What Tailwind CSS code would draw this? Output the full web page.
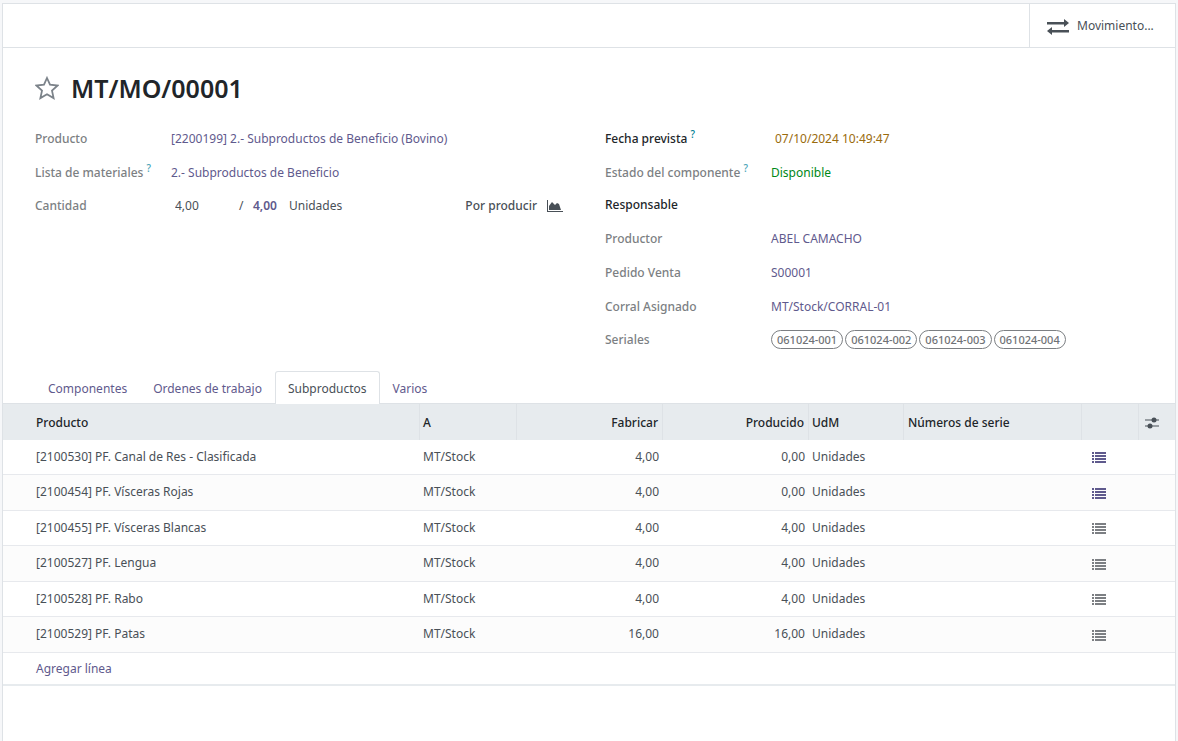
<!DOCTYPE html>
<html lang="es">
<head>
  <meta charset="UTF-8" />
  <meta name="viewport" content="width=device-width, initial-scale=1" />
  <title>MT/MO/00001 - Orden de fabricación</title>
  <script src="https://cdn.jsdelivr.net/npm/@tailwindcss/browser@4"></script>
</head>
<body class="min-h-screen flex flex-col bg-[#f6f7f9] px-[2px] pt-[3px] font-['Segoe_UI','Noto_Sans',sans-serif] text-[12px] leading-5 text-[#495057]">

  <svg class="hidden">
    <symbol id="icon-list" viewBox="0 0 14 11">
      <path d="M0 0h2v2H0zM3 0h11v2H3zM0 3h2v2H0zM3 3h11v2H3zM0 6h2v2H0zM3 6h11v2H3zM0 9h2v2H0zM3 9h11v2H3z" />
    </symbol>
  </svg>

  <main class="grow flex flex-col bg-white border border-b-0 border-[#dee2e6]">

    <!-- Stat buttons -->
    <div class="h-11 flex justify-end border-b border-[#dee2e6]">
      <button type="button" class="w-[146px] flex items-center gap-[7px] pl-4 border-l border-[#dee2e6]">
        <svg class="w-6 h-4 mt-[2px] fill-[#495057]" viewBox="0 0 24 16">
          <path d="M1 3h17V0l5 4-5 4V5.500H1zM23 13.500H6V16l-5-4 5-4v3h17z" />
        </svg>
        <span>Movimiento...</span>
      </button>
    </div>

    <!-- Title -->
    <div class="flex items-center gap-3 px-8 pt-6">
      <button type="button" aria-label="Favorito">
        <svg class="w-6 h-6 fill-none stroke-[#7c838a]" viewBox="0 0 24 24" stroke-width="1.8">
          <path d="M12 2l3 6.700 7.700.8-5.700 5.100 1.600 7.500L12 18.300l-6.600 3.800L7 14.600 1.300 9.500 9 8.700z" />
        </svg>
      </button>
      <h1 class="text-[25px] leading-8 font-semibold text-[#212529]">MT/MO/00001</h1>
    </div>

    <!-- Fields -->
    <div class="grid grid-cols-2 gap-8 px-8 pt-[18px]">
      <div>
        <div class="h-[34px] flex items-center">
          <span class="w-[136px] font-medium text-[#7c7f83]">Producto</span>
          <a href="#" class="text-[#5f5a8d]">[2200199] 2.- Subproductos de Beneficio (Bovino)</a>
        </div>
        <div class="h-[33px] flex items-center">
          <span class="w-[136px] font-medium text-[#7c7f83]">Lista de materiales <sup class="text-[10px] text-[#4aa5b8]">?</sup></span>
          <a href="#" class="text-[#5f5a8d]">2.- Subproductos de Beneficio</a>
        </div>
        <div class="h-[33px] flex items-center">
          <label for="qty" class="w-[136px] font-medium text-[#7c7f83]">Cantidad</label>
          <input id="qty" type="text" value="4,00" class="w-16 px-1 bg-transparent" />
          <span class="w-[18px] pl-1">/</span>
          <a href="#" class="font-semibold text-[#5f5a8d]">4,00</a>
          <span class="pl-3">Unidades</span>
          <button type="button" class="ml-auto mr-[10px] flex items-center gap-[10px] font-medium">
            Por producir
            <svg class="w-4 h-3 fill-[#495057]" viewBox="0 0 16 12">
              <path d="M0 0h1v11h15v1H0zM2 10V6l3-4 3 3 2-2 2 1 2 6z" />
            </svg>
          </button>
        </div>
      </div>

      <div>
        <div class="h-[34px] flex items-center">
          <label for="date" class="w-[166px] font-medium text-[#212529]">Fecha prevista <sup class="text-[10px] text-[#017e94]">?</sup></label>
          <input id="date" type="text" value="07/10/2024 10:49:47" class="w-40 px-1 bg-transparent text-[#9a6b0d]" />
        </div>
        <div class="h-[34px] flex items-center">
          <span class="w-[166px] font-medium whitespace-nowrap text-[#7c7f83]">Estado del componente <sup class="text-[10px] text-[#4aa5b8]">?</sup></span>
          <span class="text-[#008818]">Disponible</span>
        </div>
        <div class="h-[30px] mb-[2px] flex items-center">
          <span class="w-[166px] font-medium text-[#212529]">Responsable</span>
        </div>
        <div class="h-[34px] flex items-center">
          <span class="w-[166px] font-medium text-[#7c7f83]">Productor</span>
          <a href="#" class="text-[#5f5a8d]">ABEL CAMACHO</a>
        </div>
        <div class="h-[34px] flex items-center">
          <span class="w-[166px] font-medium text-[#7c7f83]">Pedido Venta</span>
          <a href="#" class="text-[#5f5a8d]">S00001</a>
        </div>
        <div class="h-[33px] flex items-center">
          <span class="w-[166px] font-medium text-[#7c7f83]">Corral Asignado</span>
          <a href="#" class="text-[#5f5a8d]">MT/Stock/CORRAL-01</a>
        </div>
        <div class="h-[33px] flex items-center">
          <span class="w-[166px] font-medium text-[#7c7f83]">Seriales</span>
          <div class="flex gap-[2px] text-[11px] leading-[17px] font-medium text-[#6f7276]">
            <span class="px-[5px] border border-[#7c7f83] rounded-full">061024-001</span>
            <span class="px-[5px] border border-[#7c7f83] rounded-full">061024-002</span>
            <span class="px-[5px] border border-[#7c7f83] rounded-full">061024-003</span>
            <span class="px-[5px] border border-[#7c7f83] rounded-full">061024-004</span>
          </div>
        </div>
      </div>
    </div>

    <!-- Tabs -->
    <nav class="h-[33px] mt-[15px] -mb-px relative flex pl-8 text-[#5f5a8d]">
      <a href="#" class="px-3 py-[7px] border border-transparent">Componentes</a>
      <a href="#" class="px-3 py-[7px] border border-transparent">Ordenes de trabajo</a>
      <a href="#" class="px-3 py-[7px] border border-b-0 border-[#dee2e6] rounded-t-[3px] bg-white text-[#495057]">Subproductos</a>
      <a href="#" class="px-3 py-[7px] border border-transparent">Varios</a>
    </nav>

    <table class="w-full table-fixed border-separate border-spacing-0">
      <colgroup>
        <col />
        <col class="w-[97px]" />
        <col class="w-[146px]" />
        <col class="w-[146px]" />
        <col class="w-[95px]" />
        <col class="w-[178px]" />
        <col class="w-[57px]" />
        <col class="w-[36px]" />
      </colgroup>
      <thead class="bg-[#e7ebee] text-[#212529]">
        <tr class="h-[37px] *:pt-px *:border-t *:border-[#dee2e6] *:font-medium">
          <th class="pl-[33px] text-left border-r">Producto</th>
          <th class="pl-[3px] text-left border-r">A</th>
          <th class="pr-1 text-right border-r">Fabricar</th>
          <th class="pr-1 text-right border-r">Producido</th>
          <th class="pl-[3px] text-left border-r">UdM</th>
          <th class="pl-1 text-left border-r">Números de serie</th>
          <th class="border-r"></th>
          <th>
            <button type="button" aria-label="Columnas opcionales" class="block ml-[6px]">
              <svg class="w-[14px] h-3 fill-[#495057]" viewBox="0 0 14 12">
                <path d="M0 2.500h14v1H0zM0 8.500h14v1H0z" />
                <circle cx="9" cy="3" r="2.500" />
                <circle cx="5" cy="9" r="2.500" />
              </svg>
            </button>
          </th>
        </tr>
      </thead>
      <tbody id="lines"></tbody>
      <tfoot>
        <tr class="h-[33px]">
          <td colspan="8" class="pt-px pl-[33px] border-b-2 border-[#e7ebee]"><a href="#" class="text-[#5f5a8d]">Agregar línea</a></td>
        </tr>
      </tfoot>
    </table>
  </main>

  <script>
    const lines = [
      { product: '[2100530] PF. Canal de Res - Clasificada', qty: '4,00', done: '0,00', color: 'fill-[#5f5a8d]' },
      { product: '[2100454] PF. Vísceras Rojas', qty: '4,00', done: '0,00', color: 'fill-[#5f5a8d]' },
      { product: '[2100455] PF. Vísceras Blancas', qty: '4,00', done: '4,00', color: 'fill-[#7c7f83]' },
      { product: '[2100527] PF. Lengua', qty: '4,00', done: '4,00', color: 'fill-[#7c7f83]' },
      { product: '[2100528] PF. Rabo', qty: '4,00', done: '4,00', color: 'fill-[#7c7f83]' },
      { product: '[2100529] PF. Patas', qty: '16,00', done: '16,00', color: 'fill-[#7c7f83]' },
    ];

    document.getElementById('lines').innerHTML = lines.map(line => `
      <tr class="h-[35px] even:h-[36px] even:bg-[#fcfcfc] *:pb-px *:border-b *:border-[#e7e9ed]">
        <td class="pl-[33px]">${line.product}</td>
        <td class="pl-[3px]">MT/Stock</td>
        <td class="pr-1 text-right">${line.qty}</td>
        <td class="pr-1 text-right">${line.done}</td>
        <td class="pl-[3px]">Unidades</td>
        <td></td>
        <td>
          <button type="button" aria-label="Detalles" class="block ml-[10px] pt-[2px]">
            <svg class="w-[14px] h-[11px] ${line.color}"><use href="#icon-list" /></svg>
          </button>
        </td>
        <td></td>
      </tr>
    `).join('');
  </script>

</body>
</html>
